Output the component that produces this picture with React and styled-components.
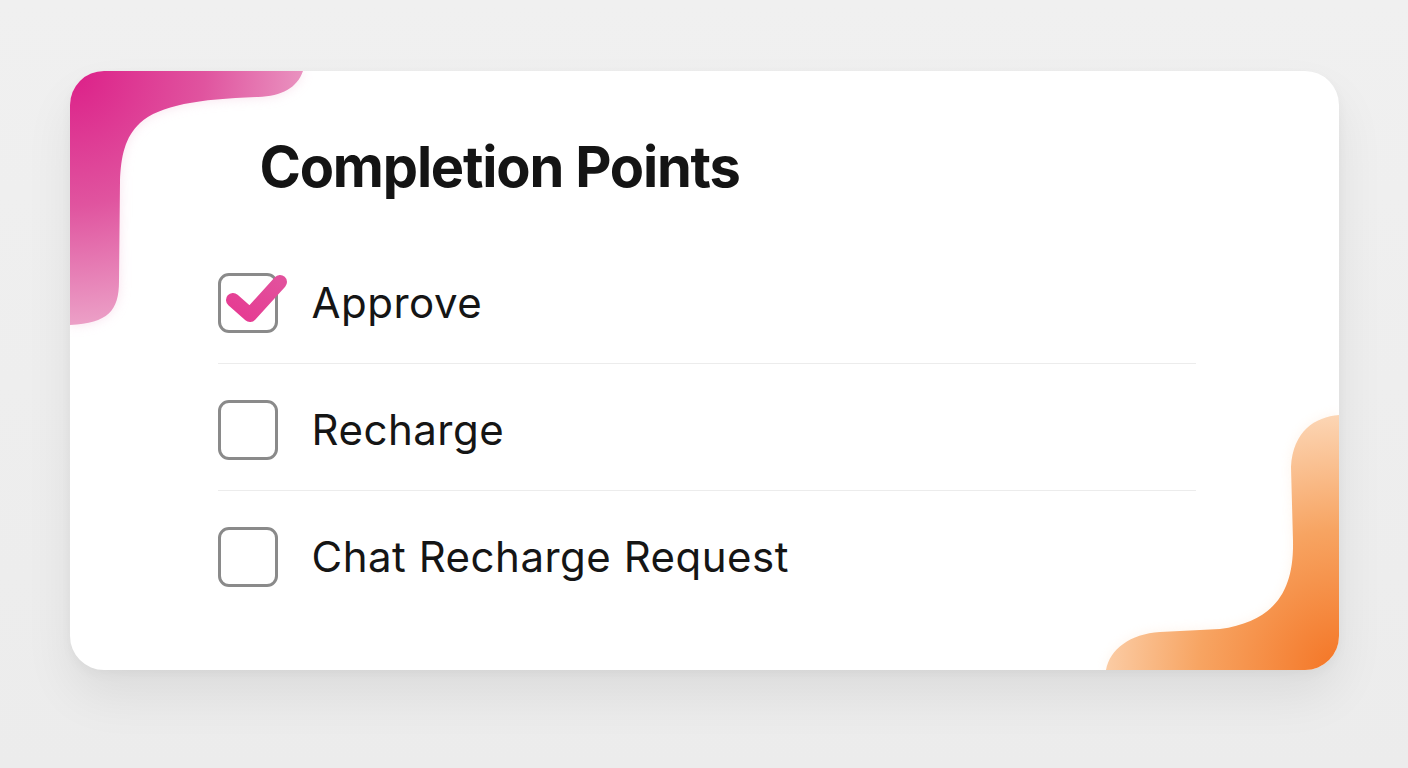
import React from "react";
import styled, { createGlobalStyle } from "styled-components";

const GlobalStyle = createGlobalStyle`
  html, body {
    margin: 0;
    padding: 0;
  }
  body {
    background: linear-gradient(180deg, #f0f0f0 0%, #ececec 100%);
    font-family: Inter, "Liberation Sans", Arial, sans-serif;
    color: #141414;
  }
`;

const items = [
  { id: "approve", label: "Approve", checked: true },
  { id: "recharge", label: "Recharge", checked: false },
  { id: "chat", label: "Chat Recharge Request", checked: false },
];

const PINK_PATH =
  "M0 0 H233 C227 17 212 25 188 26 C130 28 90 34 70 52 C55 66 51 85 50 110 L49 210 C49 240 38 252 0 254 Z";
const ORANGE_PATH =
  "M1269 344 C1245 346 1223 360 1221 396 L1223 470 C1224 520 1205 550 1150 558 L1090 561 C1060 563 1040 578 1036 599 L1269 599 Z";

function Decor() {
  return (
    <DecorLayer viewBox="0 0 1269 599" preserveAspectRatio="none">
      <defs>
        <radialGradient id="pinkGrad" cx="0" cy="0" r="300" gradientUnits="userSpaceOnUse">
          <stop offset="0" stopColor="#dc1f88" />
          <stop offset="0.45" stopColor="#e0549f" />
          <stop offset="1" stopColor="#f0bdd6" />
        </radialGradient>
        <radialGradient id="orangeGrad" cx="1269" cy="599" r="280" gradientUnits="userSpaceOnUse">
          <stop offset="0" stopColor="#f47525" />
          <stop offset="0.5" stopColor="#f7a462" />
          <stop offset="1" stopColor="#fde0c6" />
        </radialGradient>
        <filter id="soft" x="-20%" y="-20%" width="140%" height="140%">
          <feGaussianBlur stdDeviation="6" />
        </filter>
      </defs>
      <path d={PINK_PATH} fill="#f3c4dc" opacity="0.5" filter="url(#soft)" />
      <path d={PINK_PATH} fill="url(#pinkGrad)" />
      <path d={ORANGE_PATH} fill="#fde3cc" opacity="0.4" filter="url(#soft)" />
      <path d={ORANGE_PATH} fill="url(#orangeGrad)" />
    </DecorLayer>
  );
}

function CheckBox({ checked }) {
  return (
    <Box>
      {checked && (
        <CheckMark viewBox="0 0 80 80">
          <defs>
            <linearGradient id="checkGrad" x1="0" y1="1" x2="1" y2="0">
              <stop offset="0" stopColor="#e63b92" />
              <stop offset="1" stopColor="#e2509c" />
            </linearGradient>
          </defs>
          <path
            d="M18 38 L35 53 L65 20"
            fill="none"
            stroke="url(#checkGrad)"
            strokeWidth="14"
            strokeLinecap="round"
            strokeLinejoin="round"
          />
        </CheckMark>
      )}
    </Box>
  );
}

export default function App() {
  return (
    <>
      <GlobalStyle />
      <Page>
        <Card>
          <Decor />
          <Title>Completion Points</Title>
          <List>
            {items.map((item) => (
              <Row key={item.id}>
                <CheckBox checked={item.checked} />
                <Label>{item.label}</Label>
              </Row>
            ))}
          </List>
        </Card>
      </Page>
    </>
  );
}

const Page = styled.div`
  width: 1408px;
  height: 768px;
  padding-top: 71px;
  box-sizing: border-box;
  display: flex;
  justify-content: center;
  align-items: flex-start;
`;

const Card = styled.div`
  position: relative;
  width: 1269px;
  height: 599px;
  box-sizing: border-box;
  background: #ffffff;
  border-radius: 34px;
  overflow: hidden;
  padding: 68px 143px 0 148px;
  box-shadow: 0 26px 50px rgba(0, 0, 0, 0.07), 0 4px 12px rgba(0, 0, 0, 0.04);
`;

const DecorLayer = styled.svg`
  position: absolute;
  inset: 0;
  width: 100%;
  height: 100%;
  pointer-events: none;
`;

const Title = styled.h1`
  position: relative;
  margin: 0 0 42px 42px;
  font-size: 56px;
  line-height: 1;
  font-weight: 700;
  letter-spacing: -1.2px;
  color: #141414;
`;

const List = styled.div`
  position: relative;
  display: flex;
  flex-direction: column;
`;

const Row = styled.div`
  display: flex;
  align-items: center;
  gap: 34px;
  padding: 36px 0 30px;
  border-bottom: 1px solid #ececec;

  &:last-child {
    border-bottom: none;
  }
`;

const Box = styled.div`
  position: relative;
  flex: none;
  width: 60px;
  height: 60px;
  box-sizing: border-box;
  border: 3px solid #8a8a8a;
  border-radius: 11px;
  background: #fff;
`;

const CheckMark = styled.svg`
  position: absolute;
  left: -6px;
  top: -14px;
  width: 80px;
  height: 80px;
  overflow: visible;
`;

const Label = styled.span`
  font-size: 42px;
  line-height: 1;
  font-weight: 400;
  letter-spacing: 0.5px;
  color: #151515;
`;
